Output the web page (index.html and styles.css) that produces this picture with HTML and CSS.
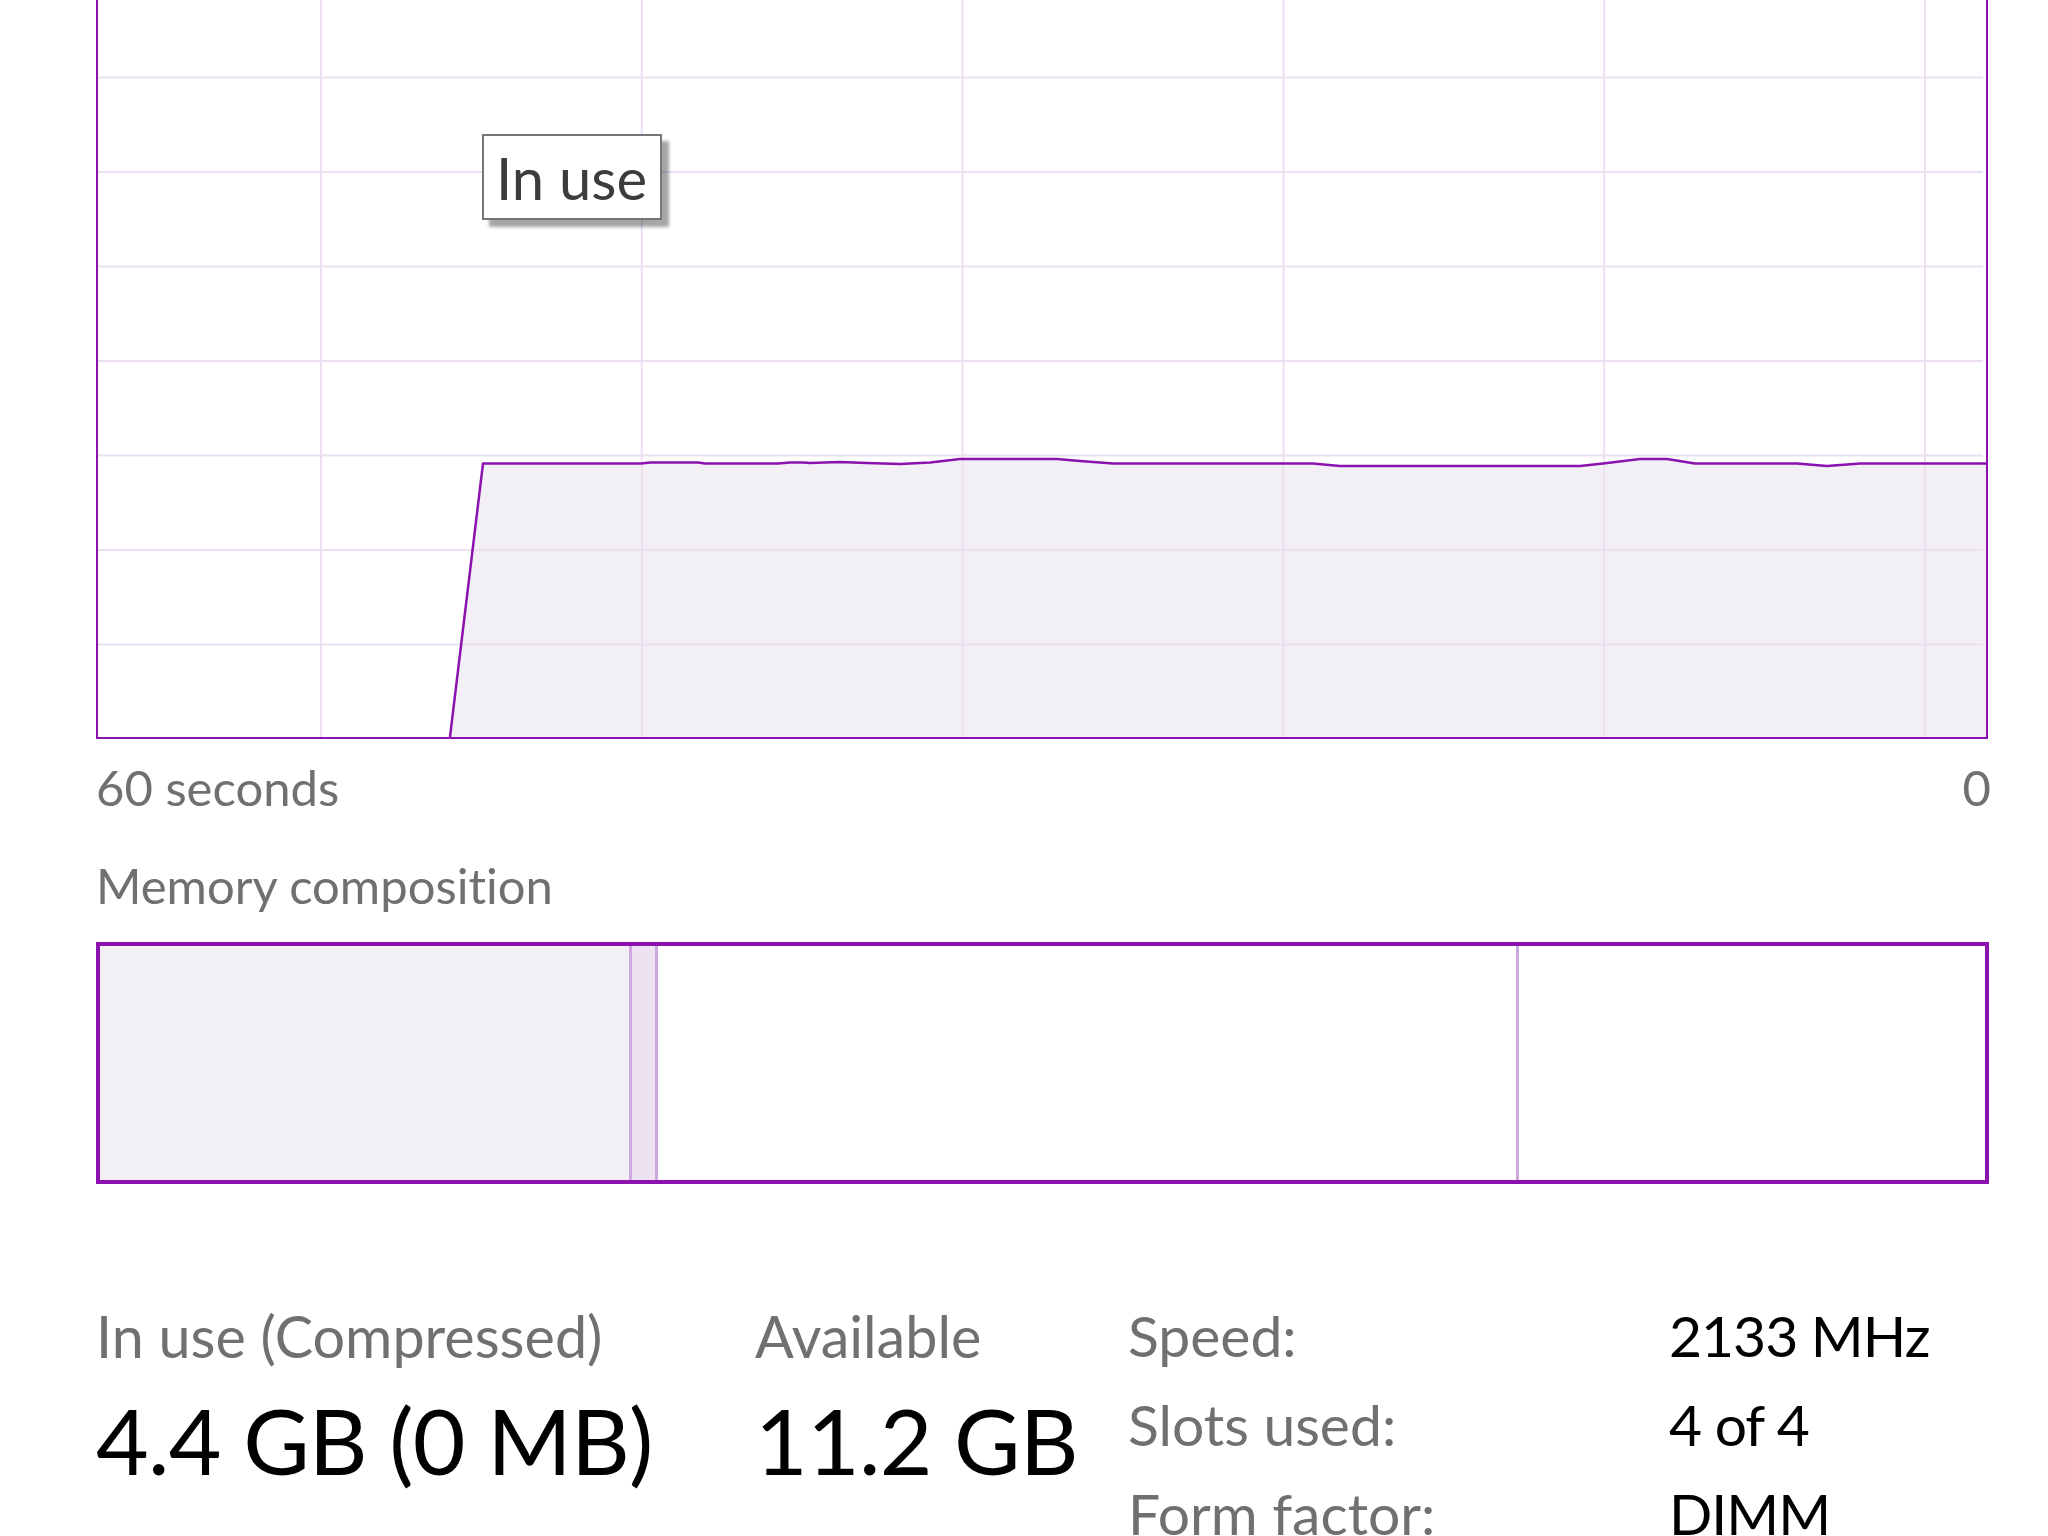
FILE: index.html
```html
<!DOCTYPE html>
<html lang="en">
<head>
<meta charset="utf-8">
<title>Memory</title>
<link rel="stylesheet" href="styles.css">
</head>
<body>
<div class="page">
  <div class="graph">
    <svg class="graph-svg" viewBox="0 0 1888 943" xmlns="http://www.w3.org/2000/svg" preserveAspectRatio="none">
      <polygon class="graph-fill" points="352,943 385,669.5 543,669.5 552,668.5 600,668.5 607,669.5 680,669.5 692,668.5 705,668.5 712,669 742,668 769,669 802,670 832,668.5 862,665 959,665 982,667 1015,669.5 1215,669.5 1242,672 1482,672 1505,669.5 1542,665 1569,665 1597,669.5 1699,669.5 1729,672 1762,669.5 1888,669.5 1888,943"/>
      <g class="graph-grid">
        <line x1="0" y1="94.5" x2="1885" y2="94.5"/>
        <line x1="0" y1="189" x2="1885" y2="189"/>
        <line x1="0" y1="283.5" x2="1885" y2="283.5"/>
        <line x1="0" y1="378" x2="1885" y2="378"/>
        <line x1="0" y1="472.5" x2="1885" y2="472.5"/>
        <line x1="0" y1="567" x2="1885" y2="567"/>
        <line x1="0" y1="661.5" x2="1885" y2="661.5"/>
        <line x1="0" y1="756" x2="1885" y2="756"/>
        <line x1="0" y1="850.5" x2="1885" y2="850.5"/>
        <line x1="223" y1="0" x2="223" y2="943"/>
        <line x1="543.8" y1="0" x2="543.8" y2="943"/>
        <line x1="864.6" y1="0" x2="864.6" y2="943"/>
        <line x1="1185.4" y1="0" x2="1185.4" y2="943"/>
        <line x1="1506.2" y1="0" x2="1506.2" y2="943"/>
        <line x1="1827" y1="0" x2="1827" y2="943"/>
      </g>
      <polyline class="graph-line" points="352,943 385,669.5 543,669.5 552,668.5 600,668.5 607,669.5 680,669.5 692,668.5 705,668.5 712,669 742,668 769,669 802,670 832,668.5 862,665 959,665 982,667 1015,669.5 1215,669.5 1242,672 1482,672 1505,669.5 1542,665 1569,665 1597,669.5 1699,669.5 1729,672 1762,669.5 1888,669.5"/>
    </svg>
    <div class="tooltip">In use</div>
  </div>

  <div class="axis">
    <span>60 seconds</span>
    <span class="axis-end">0</span>
  </div>

  <div class="section-title">Memory composition</div>

  <div class="composition">
    <div class="seg seg-inuse" style="width:532px"></div>
    <div class="seg seg-modified" style="width:26px"></div>
    <div class="seg seg-standby" style="width:861px"></div>
    <div class="seg seg-free"></div>
  </div>

  <div class="stats">
    <div class="stat stat-inuse">
      <div class="stat-label">In use (Compressed)</div>
      <div class="stat-value">4.4 GB (0 MB)</div>
    </div>
    <div class="stat stat-available">
      <div class="stat-label">Available</div>
      <div class="stat-value">11.2 GB</div>
    </div>
    <div class="specs">
      <div class="spec-label">Speed:</div>
      <div class="spec-value">2133 MHz</div>
      <div class="spec-label">Slots used:</div>
      <div class="spec-value">4 of 4</div>
      <div class="spec-label">Form factor:</div>
      <div class="spec-value">DIMM</div>
    </div>
  </div>
</div>
</body>
</html>
```

FILE: styles.css
```css
* {
  box-sizing: border-box;
}

html,
body {
  margin: 0;
  padding: 0;
  background: #ffffff;
}

body {
  font-family: Lato, "Open Sans", sans-serif;
  font-variant-ligatures: none;
  font-feature-settings: "liga" 0, "clig" 0;
  overflow: hidden;
  height: 1536px;
}

.page {
  padding: 0 60px 0 96px;
}

.graph {
  position: relative;
  margin-top: -208px;
  height: 947px;
  border: 2px solid #8b12ae;
}

.graph-svg {
  display: block;
  width: 100%;
  height: 943px;
}

.graph-fill {
  fill: #f2f0f4;
}

.graph-grid line {
  stroke: #ecdff1;
  stroke-width: 2;
}

.graph-line {
  fill: none;
  stroke: #8b12ae;
  stroke-width: 2.5;
  stroke-linejoin: round;
}

.tooltip {
  position: absolute;
  left: 384px;
  top: 340px;
  padding: 7px 13px 5px 12px;
  background: #ffffff;
  border: 2px solid #767676;
  box-shadow: 7px 7px 3px rgba(0, 0, 0, 0.35);
  font-size: 58px;
  line-height: 70px;
  color: #3c3c3c;
  white-space: nowrap;
}

.axis {
  display: flex;
  justify-content: space-between;
  margin-top: 18px;
  font-size: 49px;
  line-height: 60px;
  color: #707070;
}

.axis-end {
  margin-right: -3px;
}

.section-title {
  margin-top: 38px;
  font-size: 49px;
  line-height: 60px;
  color: #707070;
}

.composition {
  display: flex;
  margin-top: 27px;
  margin-right: -1px;
  height: 242px;
  border: 4px solid #8b12ae;
}

.seg {
  height: 100%;
}

.seg-inuse {
  background: #f2f0f4;
  border-right: 3px solid #cda8de;
}

.seg-modified {
  background: #ece2f1;
  border-right: 3px solid #cda8de;
}

.seg-standby {
  background: #ffffff;
  border-right: 3px solid #cda8de;
}

.seg-free {
  flex: 1;
  background: #ffffff;
}

.stats {
  display: flex;
  margin-top: 107px;
}

.stat {
  display: flex;
  flex-direction: column;
}

.stat-inuse {
  width: 659px;
}

.stat-available {
  width: 373px;
}

.stat-label {
  font-size: 57.5px;
  line-height: 89px;
  color: #707070;
  white-space: nowrap;
}

.stat-value {
  margin-top: 4px;
  font-size: 91px;
  line-height: 112px;
  letter-spacing: -0.8px;
  color: #000000;
  white-space: nowrap;
}

.specs {
  display: grid;
  grid-template-columns: 541px auto;
  font-size: 57px;
  line-height: 89px;
  white-space: nowrap;
}

.spec-label {
  color: #707070;
}

.spec-value {
  color: #000000;
  letter-spacing: -1px;
}
```
